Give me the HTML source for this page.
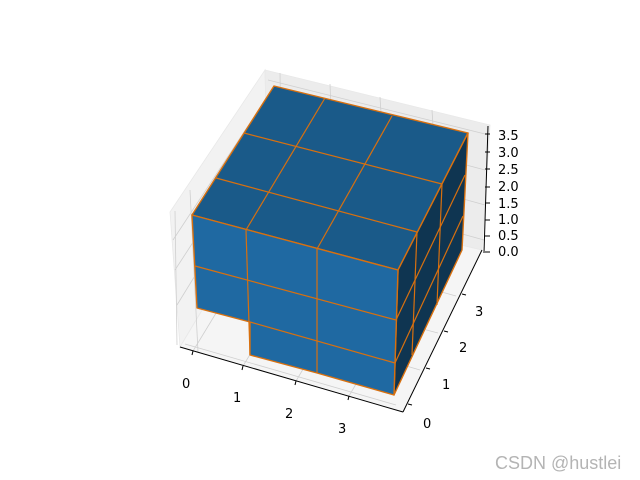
<!DOCTYPE html>
<html><head><meta charset="utf-8"><style>
html,body{margin:0;padding:0;background:#fff;width:640px;height:480px;overflow:hidden}
svg{display:block}
text{font-family:"DejaVu Sans","Liberation Sans",sans-serif;font-size:13px;fill:#000}
</style></head><body>
<svg width="640" height="480" viewBox="0 0 640 480" xmlns="http://www.w3.org/2000/svg">
<polygon points="180,347 170,212 265,70 268,200" fill="#f2f2f2" stroke="#e8e8e8" stroke-width="0.8"/>
<polygon points="268,200 265,70 490,125 482,250" fill="#ececec" stroke="#e8e8e8" stroke-width="0.8"/>
<polygon points="180,347 403,412 482,250 268,200" fill="#f5f5f5" stroke="#e8e8e8" stroke-width="0.8"/>
<g stroke="#cfcfcf" stroke-width="0.8" fill="none">
<line x1="177" y1="305" x2="266" y2="160"/>
<line x1="175" y1="270" x2="266" y2="130"/>
<line x1="173" y1="240" x2="265" y2="100"/>
<line x1="177" y1="345" x2="175" y2="211"/>
<line x1="198" y1="352" x2="190" y2="190"/>
<line x1="280" y1="73" x2="282" y2="200"/>
<line x1="330" y1="84" x2="335" y2="215"/>
<line x1="380" y1="97" x2="388" y2="225"/>
<line x1="432" y1="110" x2="440" y2="238"/>
<line x1="485" y1="134" x2="268" y2="80"/>
<line x1="485" y1="170" x2="268" y2="112"/>
<line x1="485" y1="205" x2="268" y2="145"/>
<line x1="484" y1="240" x2="268" y2="180"/>
<line x1="193" y1="351" x2="283" y2="203"/>
<line x1="243" y1="366" x2="335" y2="215"/>
<line x1="296" y1="381" x2="388" y2="227"/>
<line x1="349" y1="396" x2="440" y2="240"/>
<line x1="396" y1="405" x2="185" y2="344"/>
<line x1="420" y1="370" x2="215" y2="310"/>
<line x1="438" y1="333" x2="235" y2="280"/>
<line x1="456" y1="296" x2="255" y2="240"/>
</g>
<g stroke="#000" stroke-width="1" fill="none">
<line x1="180" y1="347" x2="403" y2="412"/>
<line x1="403" y1="412" x2="482" y2="250"/>
<line x1="488" y1="126" x2="484" y2="253"/>
<line x1="193" y1="351" x2="192" y2="355"/>
<line x1="243" y1="366" x2="242" y2="370"/>
<line x1="296" y1="381" x2="295" y2="385"/>
<line x1="349" y1="396" x2="348" y2="400"/>
<line x1="408" y1="404" x2="412" y2="405"/>
<line x1="426" y1="368" x2="430" y2="369"/>
<line x1="444" y1="331" x2="448" y2="332"/>
<line x1="462" y1="294" x2="466" y2="295"/>
<line x1="485" y1="134" x2="490" y2="134"/>
<line x1="485" y1="152" x2="490" y2="152"/>
<line x1="485" y1="169" x2="490" y2="169"/>
<line x1="485" y1="187" x2="490" y2="187"/>
<line x1="485" y1="203" x2="490" y2="203"/>
<line x1="485" y1="220" x2="490" y2="220"/>
<line x1="485" y1="236" x2="490" y2="236"/>
<line x1="485" y1="252" x2="490" y2="252"/>
</g>
<text x="182" y="388">0</text><text x="233" y="402">1</text><text x="285" y="418">2</text><text x="338" y="433">3</text>
<text x="423" y="428">0</text><text x="442" y="389">1</text><text x="459" y="352">2</text><text x="475" y="316">3</text>
<g>
<text x="498" y="140">3.5</text><text x="498" y="157">3.0</text><text x="498" y="174">2.5</text><text x="498" y="191">2.0</text>
<text x="498" y="208">1.5</text><text x="498" y="224">1.0</text><text x="498" y="240">0.5</text><text x="498" y="256">0.0</text>
</g>
<g stroke="#d8700f" stroke-width="1.4" stroke-linejoin="round">
<polygon points="274,86 468,133 398,270 192,215" fill="#1a5a89"/>
<polygon points="398,270 468,133 462,250 394,395" fill="#0f3551"/>
<polygon points="192,215 398,270 394,395 317,373 250,355 250,322 197,308" fill="#1f69a2"/>
</g>
<g stroke="#d8700f" stroke-width="1.2" fill="none">
<line x1="244" y1="133" x2="442" y2="184"/>
<line x1="216" y1="178" x2="417" y2="232"/>
<line x1="325" y1="98" x2="246" y2="230"/>
<line x1="392" y1="116" x2="317" y2="249"/>
<line x1="246" y1="230" x2="250" y2="355"/>
<line x1="317" y1="249" x2="317" y2="373"/>
<line x1="195" y1="266" x2="396" y2="320"/>
<line x1="250" y1="322" x2="395" y2="363"/>
<line x1="442" y1="184" x2="437" y2="305"/>
<line x1="417" y1="232" x2="412" y2="355"/>
<line x1="396" y1="320" x2="465" y2="175"/>
<line x1="395" y1="363" x2="463" y2="216"/>
</g>
<text x="495" y="469" style="font-family:'Liberation Sans',sans-serif;font-size:18px;fill:#b4b4b4">CSDN @hustlei</text>
</svg>
</body></html>
